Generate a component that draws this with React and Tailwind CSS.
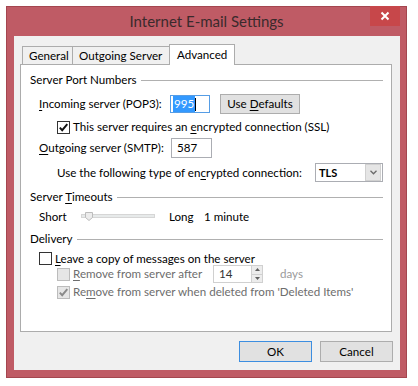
import React from "react";

function Check({ color }) {
  return (
    <svg width="11" height="11" viewBox="0 0 11 11" className="block">
      <polyline points="1.8,5.6 4.2,8.2 9.3,2.2" fill="none" stroke={color} strokeWidth="1.9" />
    </svg>
  );
}

function Checkbox({ checked, disabled }) {
  return (
    <span
      className={
        "w-[13px] h-[13px] shrink-0 flex items-center justify-center border " +
        (disabled ? "border-[#bcbcbc] bg-[#e6e6e6]" : "border-[#333333] bg-white")
      }
    >
      {checked ? <Check color={disabled ? "#8a8a8a" : "#111111"} /> : null}
    </span>
  );
}

function Header({ children }) {
  return (
    <div className="h-[16px] flex items-center">
      <span className="leading-none">{children}</span>
      <span className="flex-1 h-px bg-[#b0b0b0] ml-[4px]" />
    </div>
  );
}

export default function App() {
  return (
    <div className="w-[418px] h-[386px] bg-white pt-[6px] pl-[6px] font-[Lato,'Open_Sans',sans-serif] text-[11.6px] text-black">
      <div className="w-[401px] h-[372px] border border-[#a4464f] bg-[#bf5b65] flex flex-col">
        {/* Title bar */}
        <div className="relative h-[29px] flex items-center justify-center">
          <span className="text-[15px] text-[#3a2a2c] leading-none">Internet E-mail Settings</span>
          <div className="absolute top-[-1px] right-[6px] w-[30px] h-[20px] bg-[#c7474a] flex items-center justify-center">
            <svg width="10" height="10" viewBox="0 0 10 10">
              <path d="M1.5 1.5 L8.5 8.5 M8.5 1.5 L1.5 8.5" stroke="#ffffff" strokeWidth="2" />
            </svg>
          </div>
        </div>
        {/* Client */}
        <div className="ml-[7px] mr-[6px] h-[334px] bg-[#f0f0f0] flex flex-col pt-[8px] pl-[6px] pr-[8px]">
          {/* Tabs */}
          <div className="h-[20px] flex items-end pl-[2px]">
            <div className="h-[18px] w-[51px] border-l border-t border-r border-[#acacac] bg-[#f0f0f0] flex items-center pl-[6px] leading-none">
              General
            </div>
            <div className="h-[18px] w-[97px] border-t border-r border-[#acacac] bg-[#f0f0f0] flex items-center pl-[6px] leading-none">
              Outgoing Server
            </div>
            <div className="relative z-10 ml-[-1px] mb-[-1px] h-[21px] w-[66px] border-l border-t border-r border-[#acacac] bg-white flex items-start pt-[4px] pl-[7px] leading-none">
              Advanced
            </div>
          </div>
          {/* Panel */}
          <div className="h-[268px] border border-[#acacac] bg-white flex flex-col pl-[9px] pr-[8px]">
            <div className="mt-[7px]">
              <Header>Server Port Numbers</Header>
            </div>
            <div className="mt-[6px] h-[20px] flex items-center pl-[9px]">
              <span className="w-[131px] leading-none">
                <span className="underline underline-offset-2">I</span>ncoming server (POP3):
              </span>
              <div className="w-[40px] h-[18px] border border-[#569de5] bg-white flex items-center pl-[2px]">
                <span className="bg-[#3399ff] text-white leading-none px-[1px] py-[2px]">995</span>
                <span className="w-px h-[13px] bg-black" />
              </div>
              <button className="ml-[10px] w-[80px] h-[20px] border border-[#adadad] bg-[#e1e1e1] leading-none">
                Use <span className="underline underline-offset-2">D</span>efaults
              </button>
            </div>
            <div className="mt-[5px] h-[16px] flex items-center pl-[27px]">
              <Checkbox checked />
              <span className="ml-[3px] leading-none">
                This server requires an <span className="underline underline-offset-2">e</span>ncrypted connection (SSL)
              </span>
            </div>
            <div className="mt-[3px] h-[20px] flex items-center pl-[9px]">
              <span className="w-[132px] leading-none">
                <span className="underline underline-offset-2">O</span>utgoing server (SMTP):
              </span>
              <div className="w-[41px] h-[20px] border border-[#abadb3] bg-white flex items-center pl-[5px] leading-none">
                587
              </div>
            </div>
            <div className="mt-[5px] h-[19px] flex items-center pl-[27px]">
              <span className="leading-none">
                Use the following type of en<span className="underline underline-offset-2">c</span>rypted connection:
              </span>
              <div className="ml-auto w-[68px] h-[19px] border border-[#abadb3] bg-white flex items-center">
                <span className="flex-1 pl-[3px] leading-none font-bold text-[11px]">TLS</span>
                <span className="w-[16px] h-[17px] mr-px bg-[#e5e5e5] border border-[#d0d0d0] flex items-center justify-center">
                  <svg width="7" height="5" viewBox="0 0 7 5">
                    <polyline points="0.5,0.8 3.5,3.8 6.5,0.8" fill="none" stroke="#6a6a6a" strokeWidth="1.3" />
                  </svg>
                </span>
              </div>
            </div>
            <div className="mt-[7px]">
              <Header>
                Server <span className="underline underline-offset-2">T</span>imeouts
              </Header>
            </div>
            <div className="mt-[4px] h-[16px] flex items-center pl-[9px]">
              <span className="w-[42px] leading-none">Short</span>
              <svg width="74" height="16" viewBox="0 0 74 16" className="block">
                <rect x="0.5" y="5.5" width="73" height="3" fill="#e7eaea" stroke="#d6d6d6" />
                <path d="M4.5 3.5 H11.5 V8.5 L8 11.5 L4.5 8.5 Z" fill="#ececec" stroke="#bcbcbc" />
              </svg>
              <span className="ml-[14px] w-[35px] leading-none">Long</span>
              <span className="leading-none">1 minute</span>
            </div>
            <div className="mt-[6px]">
              <Header>Delivery</Header>
            </div>
            <div className="mt-[5px] h-[13px] flex items-center pl-[9px]">
              <Checkbox />
              <span className="ml-[3px] leading-none">
                <span className="underline underline-offset-2">L</span>eave a copy of messages on the server
              </span>
            </div>
            <div className="h-[18px] flex items-center pl-[27px]">
              <Checkbox disabled />
              <span className="ml-[3px] w-[140px] leading-none text-[#6d6d6d]">
                <span className="underline underline-offset-2">R</span>emove from server after
              </span>
              <div className="w-[50px] h-[18px] border border-[#d0d0d0] bg-white flex">
                <span className="flex-1 flex items-center pl-[5px] leading-none text-[#333]">14</span>
                <span className="w-[11px] flex flex-col border-l border-[#d0d0d0]">
                  <span className="flex-1 bg-[#ececec] border-b border-[#d0d0d0] flex items-center justify-center">
                    <svg width="5" height="3" viewBox="0 0 5 3"><path d="M0 3 L2.5 0 L5 3 Z" fill="#606060" /></svg>
                  </span>
                  <span className="flex-1 bg-[#ececec] flex items-center justify-center">
                    <svg width="5" height="3" viewBox="0 0 5 3"><path d="M0 0 L2.5 3 L5 0 Z" fill="#606060" /></svg>
                  </span>
                </span>
              </div>
              <span className="ml-[17px] leading-none text-[#9a9a9a]">days</span>
            </div>
            <div className="mt-[2px] h-[14px] flex items-center pl-[27px]">
              <Checkbox checked disabled />
              <span className="ml-[3px] leading-none text-[#6d6d6d]">
                Re<span className="underline underline-offset-2">m</span>ove from server when deleted from 'Deleted Items'
              </span>
            </div>
          </div>
          {/* Buttons */}
          <div className="mt-[9px] flex justify-end gap-[8px] mr-[-1px]">
            <button className="w-[73px] h-[21px] border border-[#3d8ee0] bg-[#e1e1e1] leading-none">OK</button>
            <button className="w-[73px] h-[21px] border border-[#adadad] bg-[#e1e1e1] leading-none">Cancel</button>
          </div>
        </div>
      </div>
    </div>
  );
}
